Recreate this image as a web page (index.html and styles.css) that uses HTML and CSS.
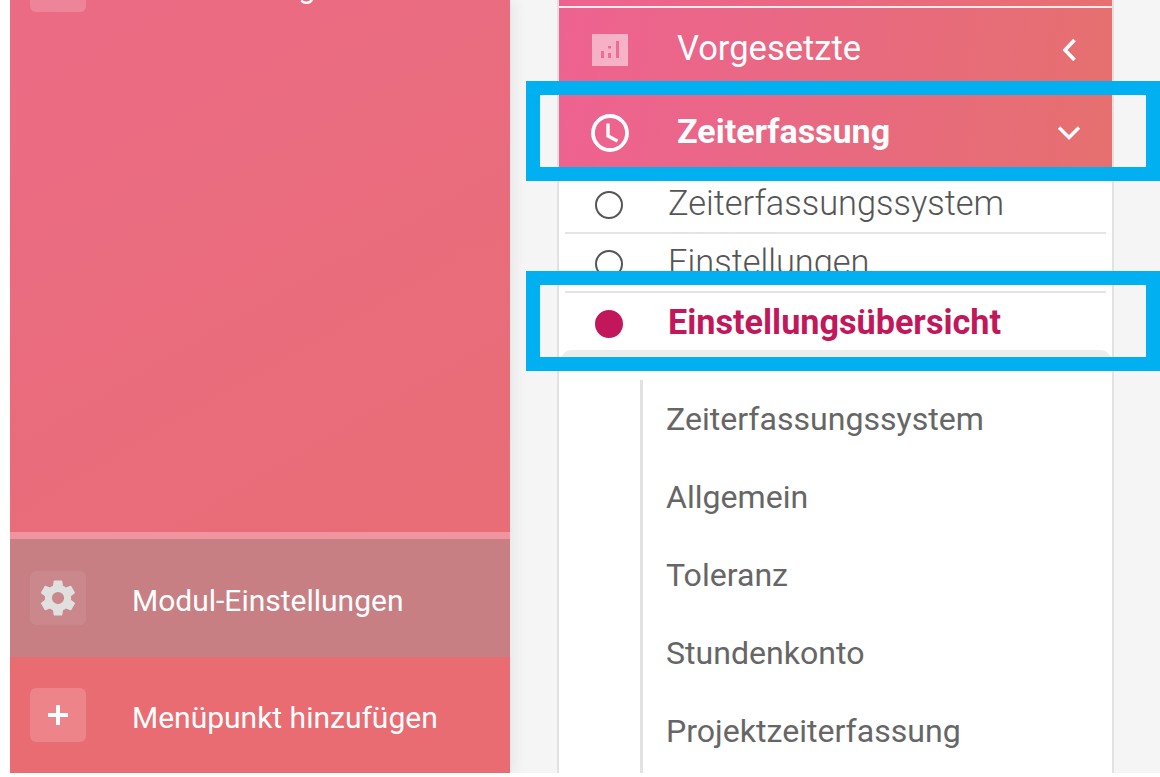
FILE: index.html
```html
<!DOCTYPE html>
<html lang="de">
<head>
<meta charset="utf-8">
<title>Zeiterfassung</title>
<link rel="stylesheet" href="styles.css">
</head>
<body>
<div class="page">
  <div class="content">
    <aside class="sidebar">
      <div class="side-top">
        <div class="side-row clipped">
          <span class="side-icon"><svg viewBox="0 0 56 54" class="ico"><rect x="18" y="16" width="20" height="24" rx="2" fill="#fff"/></svg></span>
          <span class="side-label">Unterweisungen</span>
        </div>
      </div>
      <div class="side-sep"></div>
      <div class="side-row settings">
        <span class="side-icon">
          <svg viewBox="0 0 24 24" class="gear"><path fill="#e0e0de" fill-rule="evenodd" d="M19.4 13c.04-.33.06-.66.06-1s-.02-.67-.06-1l2.1-1.65a.5.5 0 0 0 .12-.64l-2-3.46a.5.5 0 0 0-.6-.22l-2.49 1a7.3 7.3 0 0 0-1.7-.98l-.38-2.65A.49.49 0 0 0 14 2h-4a.49.49 0 0 0-.49.42l-.38 2.65c-.61.25-1.17.59-1.69.98l-2.49-1a.5.5 0 0 0-.61.22l-2 3.46a.49.49 0 0 0 .12.64L4.57 11c-.04.33-.07.67-.07 1s.03.67.07 1l-2.11 1.65a.5.5 0 0 0-.12.64l2 3.46c.12.22.39.3.61.22l2.49-1c.52.4 1.08.73 1.69.98l.38 2.65c.03.24.24.42.49.42h4c.25 0 .46-.18.49-.42l.38-2.65c.61-.25 1.17-.59 1.69-.98l2.49 1c.23.09.49 0 .61-.22l2-3.46a.5.5 0 0 0-.12-.64zM12 15.500a3.500 3.500 0 1 1 0-7 3.500 3.500 0 0 1 0 7z"/></svg>
        </span>
        <span class="side-label">Modul-Einstellungen</span>
      </div>
      <div class="side-row add">
        <span class="side-icon">
          <svg viewBox="0 0 56 54" class="ico"><path d="M28 17v20M18 27h20" stroke="#fff" stroke-width="4" fill="none"/></svg>
        </span>
        <span class="side-label">Menüpunkt hinzufügen</span>
      </div>
    </aside>

    <main class="card">
      <div class="card-top"></div>
      <div class="nav-row first">
        <span class="nav-icon">
          <svg viewBox="0 0 36 32" class="bars"><rect width="36" height="32" fill="#fff" fill-opacity=".5"/><path d="M9 17h3v7H9zM16 12h3v2.500h-3zM16 19h3v5h-3zM24 7h3v17h-3z" fill="#ee6c96"/></svg>
        </span>
        <span class="nav-label">Vorgesetzte</span>
        <svg viewBox="0 0 16 24" class="chev left"><path d="M13.500 2L4 12l9.500 10" stroke="#fff" stroke-width="3.600" fill="none"/></svg>
      </div>
      <div class="nav-row">
        <span class="nav-icon">
          <svg viewBox="0 0 40 40" class="clock"><circle cx="20" cy="20" r="17" stroke="#fff" stroke-width="3.800" fill="none"/><path d="M18 10.500v12.500l9.500 5" stroke="#fff" stroke-width="3.400" fill="none"/></svg>
        </span>
        <span class="nav-label strong">Zeiterfassung</span>
        <svg viewBox="0 0 24 16" class="chev down"><path d="M2 2.500l10 10 10-10" stroke="#fff" stroke-width="3.400" fill="none"/></svg>
      </div>

      <ul class="sub-list">
        <li class="sub-item"><span class="dot"></span><span>Zeiterfassungssystem</span></li>
        <li class="sub-item"><span class="dot"></span><span>Einstellungen</span></li>
        <li class="sub-item active"><span class="dot"></span><span>Einstellungsübersicht</span></li>
      </ul>

      <div class="panel">
        <ul class="panel-list">
          <li>Zeiterfassungssystem</li>
          <li>Allgemein</li>
          <li>Toleranz</li>
          <li>Stundenkonto</li>
          <li>Projektzeiterfassung</li>
        </ul>
      </div>
    </main>
  </div>

  <div class="mark mark-a"></div>
  <div class="mark mark-b"></div>
</div>
</body>
</html>
```
FILE: styles.css
```css
* { box-sizing: border-box; }
html, body { margin: 0; padding: 0; background: #fff; overflow: hidden; }
body { width: 1160px; height: 777px; font-family: Roboto, "Liberation Sans", sans-serif; }
ul { list-style: none; margin: 0; padding: 0; }

.page {
  position: relative;
  width: 1160px;
  height: 773px;
  padding-left: 10px;
  overflow: hidden;
}
.content {
  display: flex;
  height: 773px;
  background: #f5f5f5;
}

/* left module sidebar */
.sidebar {
  display: flex;
  flex-direction: column;
  flex: 0 0 500px;
  height: 773px;
  background: linear-gradient(150deg, #eb6b85 0%, #e86d76 75%, #e86e72 100%);
  box-shadow: 6px 0 12px rgba(0, 0, 0, .05);
}
.side-top { flex: 1; overflow: hidden; }
.side-row { display: flex; align-items: center; }
.side-row.clipped { height: 54px; margin-top: -42px; }
.side-icon {
  display: flex;
  align-items: center;
  justify-content: center;
  flex: 0 0 56px;
  height: 54px;
  margin-left: 20px;
  margin-right: 46px;
  border-radius: 6px;
  background: rgba(255, 255, 255, .17);
}
.side-label { padding-top: 4px; font-size: 30px; color: #fff; }
.side-sep { height: 7px; background: #f0959f; }
.settings { height: 118px; background: #c77f84; }
.settings .side-icon { background: rgba(255, 255, 255, .07); }
.add { height: 116px; background: #e86c72; }
.ico { width: 56px; height: 54px; display: block; }
.gear { width: 42px; height: 42px; display: block; }

/* right card */
.card {
  display: flex;
  flex-direction: column;
  flex: 0 0 557px;
  height: 773px;
  margin-left: 47px;
  background: #fff;
  border-left: 2px solid #e2e2e2;
  border-right: 2px solid #e2e2e2;
}
.card-top {
  flex: 0 0 8px;
  background: linear-gradient(100deg, #ee6291, #e7706f);
  border-bottom: 2px solid #fbe9ec;
}
.nav-row {
  display: flex;
  align-items: center;
  flex: 0 0 82px;
  padding-right: 32px;
  background: linear-gradient(100deg, #ee6291 0%, #e86a7f 55%, #e6706f 100%);
}
.nav-row.first { flex-basis: 84px; }
.nav-icon {
  display: flex;
  align-items: center;
  justify-content: center;
  flex: 0 0 40px;
  height: 40px;
  margin-left: 31px;
  margin-right: 47px;
}
.bars { width: 36px; height: 32px; display: block; }
.clock { width: 40px; height: 40px; display: block; }
.nav-label { flex: 1; padding-bottom: 5px; font-size: 34.5px; color: #fff; }
.nav-label.strong { font-size: 34px; font-weight: 700; }
.chev { display: block; }
.chev.left { width: 16px; height: 24px; margin-right: 3px; }
.chev.down { width: 24px; height: 16px; margin-right: -1px; }

.sub-list { flex: 0 0 auto; padding: 0 6px; }
.sub-item {
  display: flex;
  align-items: center;
  height: 59.500px;
  padding-left: 30px;
  font-size: 34.4px;
  font-weight: 300;
  color: #555;
  border-bottom: 2px solid #e4e4e4;
  overflow: hidden;
}
.sub-item.active {
  height: 57px;
  border-bottom: 0;
  color: #c2185b;
  font-weight: 700;
  font-size: 34.2px;
}
.dot {
  flex: 0 0 28px;
  height: 28px;
  margin-top: 4px;
  margin-right: 45px;
  border: 2px solid #555;
  border-radius: 50%;
}
.active .dot { background: #c2185b; border-color: #c2185b; }

.panel {
  flex: 1;
  margin: 0 1px 0 2px;
  padding: 30px 0 0 79px;
  border-radius: 10px 10px 0 0;
  box-shadow: inset 0 12px 0 #ebecec;
  overflow: hidden;
}
.panel-list { height: 100%; border-left: 3px solid #e2e2e2; }
.panel-list li {
  display: flex;
  align-items: center;
  height: 78px;
  padding-left: 23px;
  font-size: 32.1px;
  color: #666;
}

/* blue call-out frames painted on the screenshot */
.mark {
  position: absolute;
  left: 526px;
  width: 634px;
  height: 100px;
  border: 14px solid #00b0f0;
}
.mark-a { top: 81px; }
.mark-b { top: 271px; }
```
